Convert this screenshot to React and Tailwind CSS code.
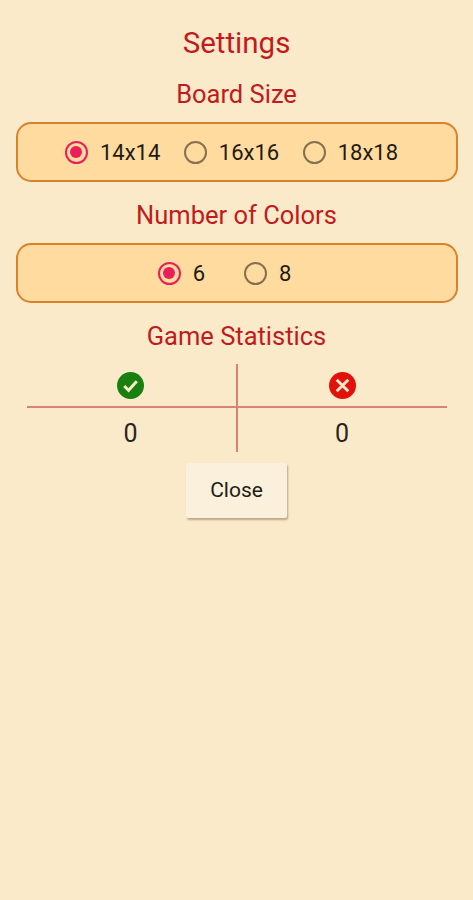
const RED = "text-[#c01c20]";

function Radio({ checked, label }) {
  return (
    <div className="flex items-center">
      <span
        className={`flex h-[23px] w-[23px] items-center justify-center rounded-full border-2 ${
          checked ? "border-[#e91e5a]" : "border-[#85714e]"
        }`}
      >
        {checked && <span className="h-[12px] w-[12px] rounded-full bg-[#e91e5a]" />}
      </span>
      <span className="mt-[1px] ml-[12px] text-[22px] leading-[26px] text-[#1f1a12]">{label}</span>
    </div>
  );
}

function Heading({ children, className = "" }) {
  return <h2 className={`text-center text-[25.5px] leading-[28px] ${RED} ${className}`}>{children}</h2>;
}

function Panel({ children, className = "" }) {
  return (
    <div
      className={`mx-[15.5px] flex h-[60px] items-center justify-center rounded-[15px] border-2 border-[#d9822b] bg-[#ffdb9f] ${className}`}
    >
      {children}
    </div>
  );
}

export default function App() {
  return (
    <div
      className="flex min-h-[900px] w-full flex-col bg-[#fbeaca] pt-[26px]"
      style={{ fontFamily: "Roboto, sans-serif" }}
    >
      <h1 className={`text-center text-[29.5px] leading-[34px] ${RED}`}>Settings</h1>
      <Heading className="mt-[20px]">Board Size</Heading>
      <Panel className="mt-[14px] gap-[23.5px] pr-[10px]">
        <Radio checked label="14x14" />
        <Radio label="16x16" />
        <Radio label="18x18" />
      </Panel>
      <Heading className="mt-[19px]">Number of Colors</Heading>
      <Panel className="mt-[14px] gap-[39px] pr-[24px]">
        <Radio checked label="6" />
        <Radio label="8" />
      </Panel>
      <Heading className="mt-[19px]">Game Statistics</Heading>

      <div className="mx-[27px] mt-[14px] grid h-[88px] w-[420px] grid-cols-[211px_209px] grid-rows-[44px_44px]">
        <div className="flex items-center justify-center border-r-2 border-b-2 border-r-[#d5837b] border-b-[#d5837b] pr-[2px]">
          <svg width="27" height="27" viewBox="0 0 28 28">
            <circle cx="14" cy="14" r="14" fill="#19800f" />
            <path d="M7.5 14.5l4.5 4.5 8.5-9.5" fill="none" stroke="#fbeaca" strokeWidth="3" />
          </svg>
        </div>
        <div className="flex items-center justify-center border-b-2 border-b-[#d5837b] pr-[1px]">
          <svg width="27" height="27" viewBox="0 0 28 28">
            <circle cx="14" cy="14" r="14" fill="#e0120a" />
            <path d="M8 8l12 12M20 8L8 20" fill="none" stroke="#fbeaca" strokeWidth="3" />
          </svg>
        </div>
        <div className="flex items-center justify-center border-r-2 border-r-[#d5837b] pt-[8px] pr-[2px] text-[25px] text-[#2a251c]">
          0
        </div>
        <div className="flex items-center justify-center pt-[8px] pr-[1px] text-[25px] text-[#2a251c]">0</div>
      </div>

      <button className="mx-auto mt-[11px] h-[55px] w-[101px] rounded-[2px] bg-[#fbf0dc] text-[21px] font-normal text-[#221d14] shadow-[1px_2px_2px_rgba(90,70,40,0.4)]">
        Close
      </button>
    </div>
  );
}
